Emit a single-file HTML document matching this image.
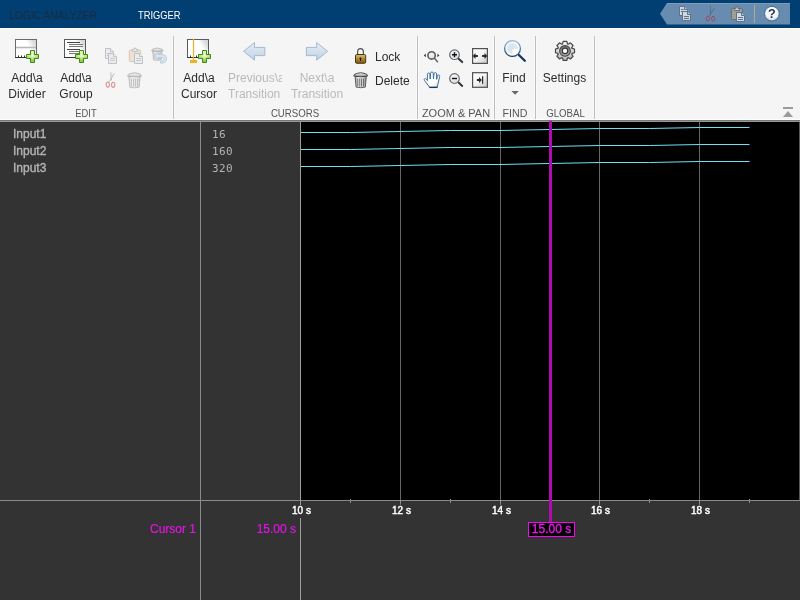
<!DOCTYPE html>
<html>
<head>
<meta charset="utf-8">
<title>Logic Analyzer</title>
<style>
html,body{margin:0;padding:0;}
body{width:800px;height:600px;overflow:hidden;background:#333333;position:relative;font-family:"Liberation Sans",sans-serif;font-size:12px;}
#root{position:absolute;left:0;top:0;width:800px;height:600px;will-change:transform;}
.abs{position:absolute;}
#title{left:0;top:0;width:800px;height:28px;background:#013f73;}
#title .tab{position:absolute;top:8px;font-size:11px;line-height:14px;white-space:nowrap;transform-origin:0 50%;}
#strip{left:0;top:28px;width:800px;height:91px;background:#f5f5f5;border-top:1px solid #ffffff;box-sizing:border-box;}
#stripb0{left:0;top:119px;width:800px;height:1px;background:#ffffff;}
#stripb1{left:0;top:120px;width:800px;height:1px;background:#777777;}
#stripb2{left:0;top:121px;width:800px;height:1px;background:#999999;}
.sep{position:absolute;top:36px;width:1px;height:83px;background:#bebebe;box-shadow:-1px 0 0 #f9f9f9,1px 0 0 #f9f9f9;}
.lbl{position:absolute;text-align:center;font-size:12px;line-height:16px;color:#2b2b2b;white-space:nowrap;}
.lbl.dis{color:#b9b9b9;}
.sec{position:absolute;top:106px;text-align:center;font-size:11px;line-height:14px;color:#555555;white-space:nowrap;}
#plot{left:301px;top:122px;width:499px;height:378px;background:#000000;}
.vline{position:absolute;width:1px;background:#9a9a9a;}
.grid{position:absolute;top:122px;width:1px;height:378px;background:#666666;}
.mtick{position:absolute;top:500px;width:1px;height:5px;background:linear-gradient(#a0a0a0 0,#8c8c8c 60%,#6a6a6a 100%);}
.ntick{position:absolute;top:499px;width:1px;height:4px;background:#8f8f8f;}
.sig{position:absolute;left:13px;font-size:12px;line-height:14px;color:#b4b4b4;-webkit-text-stroke:0.35px #b4b4b4;}
.val{position:absolute;left:212px;font-size:11px;line-height:14px;color:#b4b4b4;font-family:"DejaVu Sans Mono","Liberation Mono",monospace;letter-spacing:0.38px;}
.tick{position:absolute;top:505px;height:13px;font-size:10px;line-height:12px;color:#ffffff;white-space:nowrap;background:#333333;padding:0 1px;-webkit-text-stroke:0.45px #ffffff;}
.mg{color:#e612e6;-webkit-text-stroke:0.2px #e612e6;}
</style>
</head>
<body>
<div id="root">
<div id="title" class="abs">
  <div class="tab" style="left:9.4px;color:#1c2b3a;transform:scaleX(0.935);">LOGIC ANALYZER</div>
  <div class="tab" style="left:138px;color:#ffffff;transform:scaleX(0.85);">TRIGGER</div>
</div>
<div id="strip" class="abs"></div>
<div id="stripb0" class="abs"></div>
<div id="stripb1" class="abs"></div>
<div id="stripb2" class="abs"></div>

<div class="sep" style="left:173px;"></div>
<div class="sep" style="left:417px;"></div>
<div class="sep" style="left:494px;"></div>
<div class="sep" style="left:535px;"></div>
<div class="sep" style="left:594px;"></div>

<div class="lbl" style="left:0px;width:54px;top:70px;">Add\a<br>Divider</div>
<div class="lbl" style="left:49px;width:54px;top:70px;">Add\a<br>Group</div>
<div class="lbl" style="left:172px;width:54px;top:70px;">Add\a<br>Cursor</div>
<div class="lbl dis" style="left:226px;width:56px;top:70px;overflow:hidden;text-align:left;"><span style="margin-left:2px">Previous\a</span><br><span style="margin-left:2px">Transition</span></div>
<div class="lbl dis" style="left:289px;width:56px;top:70px;">Next\a<br>Transition</div>
<div class="lbl" style="left:375px;top:49px;">Lock</div>
<div class="lbl" style="left:375px;top:73px;">Delete</div>
<div class="lbl" style="left:494px;width:40px;top:70px;">Find</div>
<div class="lbl" style="left:535px;width:59px;top:70px;">Settings</div>

<div class="sec" style="left:56px;width:60px;transform:scaleX(0.85);">EDIT</div>
<div class="sec" style="left:255px;width:80px;transform:scaleX(0.875);">CURSORS</div>
<div class="sec" style="left:416px;width:80px;">ZOOM &amp; PAN</div>
<div class="sec" style="left:495.5px;width:38px;transform:scaleX(0.97);">FIND</div>
<div class="sec" style="left:535.5px;width:59px;transform:scaleX(0.88);">GLOBAL</div>

<!-- TOOLSVG -->
<svg class="abs" style="left:0;top:0;" width="800" height="122" viewBox="0 0 800 122">
<defs>
  <linearGradient id="gPlus" x1="0" y1="0" x2="0" y2="1">
    <stop offset="0" stop-color="#e4f5b8"/><stop offset="0.5" stop-color="#b9e26c"/><stop offset="1" stop-color="#86c83a"/>
  </linearGradient>
  <radialGradient id="gPlusHi" cx="0.5" cy="0.4" r="0.45">
    <stop offset="0" stop-color="#ffffff" stop-opacity="0.85"/><stop offset="1" stop-color="#ffffff" stop-opacity="0"/>
  </radialGradient>
  <linearGradient id="gBox" x1="0.72" y1="0.5" x2="1" y2="0.35">
    <stop offset="0" stop-color="#ffffff"/><stop offset="1" stop-color="#d8d8d8"/>
  </linearGradient>
  <linearGradient id="gArrow" x1="0" y1="0" x2="0" y2="1">
    <stop offset="0" stop-color="#e6eef6"/><stop offset="1" stop-color="#bfd2e4"/>
  </linearGradient>
  <linearGradient id="gLock" x1="0" y1="0" x2="0" y2="1">
    <stop offset="0" stop-color="#d8bd84"/><stop offset="0.5" stop-color="#aa8836"/><stop offset="1" stop-color="#775614"/>
  </linearGradient>
  <linearGradient id="gBin" x1="0" y1="0" x2="1" y2="0">
    <stop offset="0" stop-color="#9a9a9a"/><stop offset="0.3" stop-color="#f6f6f6"/><stop offset="0.7" stop-color="#d6d6d6"/><stop offset="1" stop-color="#858585"/>
  </linearGradient>
  <linearGradient id="gLid" x1="0" y1="0" x2="0" y2="1">
    <stop offset="0" stop-color="#fafafa"/><stop offset="1" stop-color="#8a8a8a"/>
  </linearGradient>
  <linearGradient id="gBtn" x1="0" y1="0" x2="1" y2="1">
    <stop offset="0" stop-color="#ffffff"/><stop offset="0.5" stop-color="#f4f4f4"/><stop offset="1" stop-color="#c6c6c6"/>
  </linearGradient>
  <radialGradient id="gLens" cx="0.4" cy="0.35" r="0.7">
    <stop offset="0" stop-color="#f4f7fa"/><stop offset="1" stop-color="#d3dee8"/>
  </radialGradient>
  <linearGradient id="gGear" x1="0" y1="0" x2="0" y2="1">
    <stop offset="0" stop-color="#f4f4f4"/><stop offset="1" stop-color="#bdbdbd"/>
  </linearGradient>
  <linearGradient id="gGearIn" x1="0" y1="0" x2="0" y2="1">
    <stop offset="0" stop-color="#6a6a6a"/><stop offset="1" stop-color="#b0b0b0"/>
  </linearGradient>
  <linearGradient id="gHand" x1="0.3" y1="0.4" x2="0.8" y2="1"><stop offset="0" stop-color="#ffffff"/><stop offset="0.6" stop-color="#ffffff"/><stop offset="1" stop-color="#d9dde1"/></linearGradient>
  <linearGradient id="gRim" x1="0" y1="0" x2="0" y2="1"><stop offset="0" stop-color="#94b9dc"/><stop offset="0.5" stop-color="#4f7fae"/><stop offset="1" stop-color="#1c3c62"/></linearGradient>
  <radialGradient id="gLens2" cx="0.5" cy="0.5" r="0.5"><stop offset="0" stop-color="#dbe4ec"/><stop offset="0.75" stop-color="#dfe7ee"/><stop offset="1" stop-color="#f1f4f7"/></radialGradient>
  <radialGradient id="gHelp" cx="0.5" cy="0.3" r="0.8">
    <stop offset="0" stop-color="#ffffff"/><stop offset="0.6" stop-color="#f2f4f7"/><stop offset="1" stop-color="#b8c4d2"/>
  </radialGradient>
  <g id="plus">
    <path d="M4.5,0.5 H8.5 V4.5 H12.5 V8.5 H8.5 V12.5 H4.5 V8.5 H0.5 V4.5 H4.5 Z" fill="url(#gPlus)" stroke="#3b8a1c" stroke-width="1" stroke-linejoin="round"/>
    <path d="M5.5,1.5 H7.5 V5.5 H11.5 V7.5 H7.5 V11.5 H5.5 V7.5 H1.5 V5.5 H5.5 Z" fill="url(#gPlusHi)"/>
  </g>
  <g id="page">
    <path d="M0.5,0.5 H5.5 L8.5,3.5 V10.5 H0.5 Z" fill="#e3e5e7" stroke="#8a8f94" stroke-width="1"/>
    <path d="M5.5,0.5 V3.5 H8.5" fill="#f4f4f4" stroke="#8a8f94" stroke-width="1"/>
    <path d="M2,5.5 H7 M2,7.5 H7" stroke="#9da2a7" stroke-width="1"/>
  </g>
  <g id="trash">
    <path d="M1.9,4.3 L13.1,4.3 L12.1,15.0 Q7.5,16.2 2.9,15.0 Z" fill="url(#gBin)" stroke="#4e4e4e" stroke-width="0.9"/>
    <path d="M4.6,6.4 V14.2 M6.55,6.4 V14.5 M8.45,6.4 V14.5 M10.4,6.4 V14.2" stroke="#606060" stroke-width="0.95"/>
    <path d="M0.5,3.9 Q0.6,1.8 4.2,1.2 Q7.5,0.0 10.8,1.2 Q14.4,1.8 14.5,3.9 Q7.5,5.5 0.5,3.9 Z" fill="url(#gLid)" stroke="#3e3e3e" stroke-width="0.9"/>
  </g>
  <g id="scis">
    <path d="M5.1,0.3 L5.7,8.4 M8.7,1.5 L3.5,9.8" stroke="#808080" stroke-width="0.9" fill="none"/>
    <ellipse cx="2.2" cy="12.6" rx="1.6" ry="2.6" fill="none" stroke="#cc3d4a" stroke-width="1.1"/>
    <ellipse cx="7.6" cy="12.8" rx="1.6" ry="2.6" fill="none" stroke="#cc3d4a" stroke-width="1.1"/>
  </g>
  <g id="mag">
    <line x1="3.8" y1="3.8" x2="7.7" y2="7.4" stroke="#333" stroke-width="2" stroke-linecap="round"/>
    <circle cx="0" cy="0" r="4.8" fill="#fbfcfd" stroke="#666" stroke-width="1.2"/>
    <circle cx="0" cy="0" r="3.6" fill="url(#gLens)"/>
  </g>
</defs>

<!-- Add Divider -->
<rect x="15.5" y="39.5" width="21" height="18" fill="url(#gBox)" stroke="#6a6a6a"/>
<path d="M15,57.5 H37" stroke="#333" stroke-width="1"/>
<path d="M16,47.5 H36" stroke="#b9b9b9" stroke-width="1.6"/>
<path d="M18.5,55.5 V57 M21.5,55.5 V57 M24.5,55.5 V57" stroke="#333" stroke-width="1"/>
<use href="#plus" x="26" y="50"/>

<!-- Add Group -->
<rect x="64.5" y="39.5" width="21" height="18" fill="url(#gBox)" stroke="#5a5a5a"/>
<path d="M64,57.5 H86" stroke="#333" stroke-width="1"/>
<path d="M67,42.5 H80 M67,49.5 H80" stroke="#444" stroke-width="1"/>
<path d="M69,44.5 H83 M69,46.5 H83 M69,51.5 H83 M69,53.5 H83" stroke="#777" stroke-width="1"/>
<use href="#plus" x="75" y="50"/>

<!-- Copy / Paste / Restore (disabled) -->
<g opacity="0.5">
  <use href="#page" x="105" y="48"/>
  <use href="#page" x="108" y="53"/>
</g>
<g opacity="0.5">
  <rect x="129.3" y="50" width="11.4" height="11.5" rx="1" fill="#e8cfae" stroke="#b79a78"/>
  <path d="M132.5,50.5 V49.5 H134 V48.2 H136 V49.5 H137.5 V51.5 H132.5 Z" fill="#e6e6e6" stroke="#808080" stroke-width="0.9"/>
  <use href="#page" x="134" y="53"/>
</g>
<g opacity="0.42">
  <g transform="translate(151.2,47.6) scale(0.82)"><use href="#trash"/></g>
  <path d="M154.5,56 L158.5,52.3 V54.6 H162 Q166.6,54.8 166.5,59 Q166.4,63 161.5,63.2 H160.5 V61 H161.8 Q164,60.8 164,59 Q164,57.4 162,57.4 H158.5 V59.7 Z" fill="#b9d3ea" stroke="#5f8fbd" stroke-width="0.9" stroke-linejoin="round"/>
</g>
<!-- Cut / Delete (disabled) -->
<g opacity="0.55"><use href="#scis" x="105.6" y="72"/></g>
<g opacity="0.36"><use href="#trash" x="127" y="72.2"/></g>

<!-- Add Cursor -->
<rect x="187.5" y="39.5" width="21" height="18" fill="url(#gBox)" stroke="#5a5a5a"/>
<path d="M187,57.5 H209" stroke="#333" stroke-width="1"/>
<path d="M190.5,55.5 V57 M196.5,55.5 V57" stroke="#333" stroke-width="1"/>
<path d="M193.5,39 V60" stroke="#f0b11e" stroke-width="1.2"/>
<rect x="190" y="60" width="7" height="3" fill="#f0b11e"/>
<use href="#plus" x="198" y="50"/>

<!-- Prev / Next arrows (disabled) -->
<path d="M243.6,51.3 L254.5,42.6 V47.4 H264.8 V55.6 H254.5 V60.2 Z" fill="url(#gArrow)" stroke="#a3b9cf" stroke-width="1" stroke-linejoin="miter"/>
<path d="M327.6,51.3 L316.7,42.6 V47.4 H306.4 V55.6 H316.7 V60.2 Z" fill="url(#gArrow)" stroke="#a3b9cf" stroke-width="1" stroke-linejoin="miter"/>

<!-- Lock -->
<path d="M357.6,55 V52 Q357.6,48.6 360.5,48.6 Q363.4,48.6 363.4,52 V55" fill="none" stroke="#505050" stroke-width="1.2"/>
<rect x="355.5" y="54.5" width="10.2" height="8.8" rx="1.3" fill="url(#gLock)" stroke="#513806" stroke-width="1"/>
<path d="M360.5,57.2 L361.9,59 H361 V61 H360 V59 H359.1 Z" fill="#1e1606"/>
<!-- Delete trash -->
<use href="#trash" x="353.2" y="72.1"/>

<!-- Zoom & Pan -->
<g transform="translate(431.6,55.4)">
  <line x1="2.9" y1="2.9" x2="5.9" y2="6.3" stroke="#5c5c5c" stroke-width="1.4" stroke-linecap="round"/>
  <circle cx="0" cy="0" r="3.7" fill="url(#gLens)" stroke="#5a5a5a" stroke-width="1.6"/>
  <path d="M-7.8,0 L-5.8,-1.9 V1.9 Z M7.8,0 L5.8,-1.9 V1.9 Z" fill="#3a3a3a"/>
</g>
<g transform="translate(454.5,54.7)"><use href="#mag"/><path d="M-2.5,0 H2.5 M0,-2.5 V2.5" stroke="#111" stroke-width="1.4"/></g>
<g transform="translate(454.5,78.5)"><use href="#mag"/><path d="M-2.5,0 H2.5" stroke="#111" stroke-width="1.4"/></g>
<rect x="472.6" y="48.6" width="14.8" height="14.8" fill="url(#gBtn)" stroke="#505050" stroke-width="1.2"/>
<path d="M472.6,56 L475.5,53.1 V55 H477.9 V57 H475.5 V58.9 Z M487.4,56 L484.5,53.1 V55 H482.1 V57 H484.5 V58.9 Z" fill="#2c2c2c"/>
<rect x="472.6" y="72.7" width="14.8" height="14.6" fill="url(#gBtn)" stroke="#505050" stroke-width="1.2"/>
<path d="M481.9,80 L479,77.1 V79.1 H476.9 V80.9 H479 V82.9 Z" fill="#2a2a2a"/>
<path d="M482.6,76.2 V83.7" stroke="#2a2a2a" stroke-width="1.2"/>
<!-- Hand -->
<path d="M429.6,87.3 L424.4,80.3 Q423.8,79.2 424.7,78.7 Q425.5,78.3 426.2,79.1 L427.4,80.6 L427.4,74.2 Q427.4,73 428.6,73 Q429.8,73 429.8,74.2 L430.2,79 L430.6,73.2 Q430.6,72 431.9,72 Q433.2,72 433.2,73.2 L433.5,79 L434,73.8 Q434.1,72.6 435.3,72.6 Q436.6,72.7 436.6,73.9 L436.7,79.4 L437.4,75.8 Q437.7,74.7 438.8,74.9 Q439.9,75.2 439.7,76.4 L437.2,87.3 Z" fill="url(#gHand)" stroke="#3a6f9f" stroke-width="1" stroke-linejoin="round"/>
<path d="M429.3,87.4 H437.4" stroke="#17395c" stroke-width="1.3"/>

<!-- Find -->
<line x1="518.9" y1="55" x2="524.8" y2="60.8" stroke="#12355e" stroke-width="2.3" stroke-linecap="round"/>
<circle cx="512.5" cy="48.5" r="7.9" fill="#f8fafb" stroke="url(#gRim)" stroke-width="1.3"/>
<circle cx="512.3" cy="48.3" r="5.9" fill="url(#gLens2)"/>
<circle cx="515" cy="51.4" r="2.7" fill="#ffffff" opacity="0.92"/>
<path d="M511.4,91 H518.8 L515.1,94.8 Z" fill="#666"/>

<!-- Settings gear -->
<g transform="translate(565,50.9)">
  <path d="M-2.45,-7.09 L-1.89,-9.51 L1.89,-9.51 L2.45,-7.09 A7.50,7.50 0 0 1 3.28,-6.75 L5.39,-8.06 L8.06,-5.39 L6.75,-3.28 A7.50,7.50 0 0 1 7.09,-2.45 L9.51,-1.89 L9.51,1.89 L7.09,2.45 A7.50,7.50 0 0 1 6.75,3.28 L8.06,5.39 L5.39,8.06 L3.28,6.75 A7.50,7.50 0 0 1 2.45,7.09 L1.89,9.51 L-1.89,9.51 L-2.45,7.09 A7.50,7.50 0 0 1 -3.28,6.75 L-5.39,8.06 L-8.06,5.39 L-6.75,3.28 A7.50,7.50 0 0 1 -7.09,2.45 L-9.51,1.89 L-9.51,-1.89 L-7.09,-2.45 A7.50,7.50 0 0 1 -6.75,-3.28 L-8.06,-5.39 L-5.39,-8.06 L-3.28,-6.75 A7.50,7.50 0 0 1 -2.45,-7.09 Z" fill="url(#gGear)" stroke="#454545" stroke-width="1.2" stroke-linejoin="round"/>
  <circle cx="0" cy="0" r="5.9" fill="#3c3c3c"/>
  <circle cx="0" cy="0" r="4.9" fill="url(#gGearIn)"/>
  <circle cx="0" cy="0" r="3.3" fill="#3a3a3a"/>
  <circle cx="0" cy="0" r="2.1" fill="#ffffff"/>
</g>

<!-- Quick access bar -->
<path d="M660,13.7 L667,3 H790 V24.5 H667 Z" fill="#688cb0"/>
<path d="M667,3.5 H790" stroke="#7d9dbd" stroke-width="1"/>
<g opacity="0.82">
  <g transform="translate(679,6)">
    <path d="M0.5,0.5 H5.5 L8.5,3.5 V9.5 H0.5 Z" fill="#e6ebf0" stroke="#5d6d7e" stroke-width="1"/>
    <path d="M5.5,0.5 V3.5 H8.5" fill="#cfd6dd" stroke="#5d6d7e" stroke-width="1"/>
    <path d="M2,3.5 H4.5 M2,5.5 H7" stroke="#5d6d7e" stroke-width="1"/>
  </g>
  <g transform="translate(682,11)">
    <path d="M0.5,0.5 H5.5 L8.5,3.5 V9.5 H0.5 Z" fill="#e6ebf0" stroke="#5d6d7e" stroke-width="1"/>
    <path d="M5.5,0.5 V3.5 H8.5" fill="#cfd6dd" stroke="#5d6d7e" stroke-width="1"/>
    <path d="M2,5.5 H7 M2,7.5 H7" stroke="#5d6d7e" stroke-width="1"/>
  </g>
</g>
<g opacity="0.85">
  <path d="M710.5,6 V15.4 M714.4,8 L709.2,16" stroke="#56677c" stroke-width="0.9" fill="none"/>
  <ellipse cx="707.8" cy="18.7" rx="1.6" ry="2.4" fill="none" stroke="#a23d58" stroke-width="1"/>
  <ellipse cx="713.1" cy="18.7" rx="1.6" ry="2.4" fill="none" stroke="#a23d58" stroke-width="1"/>
</g>
<g opacity="0.85">
  <rect x="731.5" y="8.5" width="11" height="11" rx="1" fill="#aaa293" stroke="#6f6b62"/>
  <path d="M734.5,9.5 V8.5 H736 V6.8 H738 V8.5 H739.5 V10.5 H734.5 Z" fill="#d4d8dc" stroke="#5f6670" stroke-width="0.9"/>
  <g transform="translate(736,12)">
    <path d="M0.5,0.5 H5.5 L8.5,3.5 V9.5 H0.5 Z" fill="#e6ebf0" stroke="#5d6d7e" stroke-width="1"/>
    <path d="M5.5,0.5 V3.5 H8.5" fill="#cfd6dd" stroke="#5d6d7e" stroke-width="1"/>
    <path d="M2,5.5 H7 M2,7.5 H7" stroke="#5d6d7e" stroke-width="1"/>
  </g>
</g>
<path d="M754.5,5 V22.8" stroke="#b5a68e" stroke-width="1"/>
<circle cx="771.9" cy="13.7" r="7.3" fill="url(#gHelp)" stroke="#35587e" stroke-width="0.8"/>
<text x="771.9" y="18.2" text-anchor="middle" font-family="Liberation Sans, sans-serif" font-weight="bold" font-size="12.5" fill="#1b2f4b">?</text>

<!-- collapse -->
<rect x="783" y="107" width="10" height="2" fill="#9b9b9b"/>
<path d="M783,117 L788,111 L793,117 Z" fill="#9b9b9b"/>
</svg>
<!-- /TOOLSVG -->
<!-- main area -->
<div id="plot" class="abs"></div>
<div class="vline" style="left:200px;top:122px;height:478px;background:#8a8a8a;"></div>
<div class="vline" style="left:300px;top:122px;height:478px;background:#9e9e9e;"></div>
<div class="abs" style="left:0;top:500px;width:800px;height:1px;background:#8c8c8c;"></div>
<div class="abs" style="left:799px;top:122px;width:1px;height:378px;background:#585858;"></div>
<div class="grid" style="left:400px;"></div>
<div class="grid" style="left:500px;"></div>
<div class="grid" style="left:599px;"></div>
<div class="grid" style="left:699px;"></div>

<div class="sig" style="top:127px;">Input1</div>
<div class="sig" style="top:144px;">Input2</div>
<div class="sig" style="top:161px;">Input3</div>
<div class="val" style="top:128px;">16</div>
<div class="val" style="top:145px;">160</div>
<div class="val" style="top:162px;">320</div>

<svg class="abs" style="left:301px;top:122px;" width="499" height="378" viewBox="301 122 499 378">
  <g fill="none" stroke="#6ce4f4" stroke-width="1">
    <polyline points="301,132.5 350.45,132.5 400.3,131.5 450.15,130.5 500,130.5 549.85,129.5 599.7,128.5 649.55,128.5 699.4,127.5 749.5,127.5"/>
    <polyline points="301,149.5 350.45,149.5 400.3,148.5 450.15,147.5 500,147.5 549.85,146.5 599.7,145.5 649.55,145.5 699.4,144.5 749.5,144.5"/>
    <polyline points="301,166.5 350.45,166.5 400.3,165.5 450.15,164.5 500,164.5 549.85,163.5 599.7,162.5 649.55,162.5 699.4,161.5 749.5,161.5"/>
  </g>
</svg>

<!-- cursor -->
<div class="abs" style="left:549px;top:121px;width:3px;height:401px;background:#b00cb0;"></div>
<div class="abs mg" style="left:528px;top:522px;width:45px;height:13px;border:1px solid #ff00ff;background:#000;font-size:12px;line-height:13px;text-align:center;-webkit-text-stroke:0.3px #f414f4;color:#f414f4;">15.00 s</div>

<div class="mtick" style="left:400px;"></div><div class="mtick" style="left:500px;"></div><div class="mtick" style="left:599px;"></div><div class="mtick" style="left:699px;"></div>
<div class="ntick" style="left:350px;"></div><div class="ntick" style="left:450px;"></div><div class="ntick" style="left:649px;"></div><div class="ntick" style="left:749px;"></div>
<div class="tick" style="left:291px;">10 s</div>
<div class="tick" style="left:391px;">12 s</div>
<div class="tick" style="left:491px;">14 s</div>
<div class="tick" style="left:590px;">16 s</div>
<div class="tick" style="left:690px;">18 s</div>

<div class="abs mg" style="left:120px;width:76px;top:522px;text-align:right;font-size:12px;line-height:14px;">Cursor 1</div>
<div class="abs mg" style="left:220px;width:76px;top:522px;text-align:right;font-size:12px;line-height:14px;">15.00 s</div>
</div>
</body>
</html>
